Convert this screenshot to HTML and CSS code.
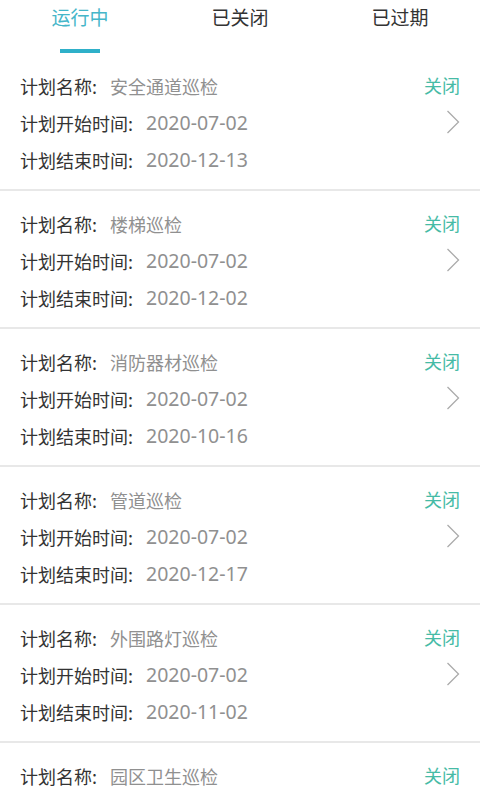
FILE: index.html
```html
<!DOCTYPE html>
<html lang="zh-CN">
<head>
<meta charset="utf-8">
<title>巡检计划</title>
<link rel="stylesheet" href="styles.css">
</head>
<body>
<div class="tabs">
  <div class="tab active"><span class="tab-text">运行中</span><span class="bar"></span></div>
  <div class="tab"><span class="tab-text">已关闭</span></div>
  <div class="tab"><span class="tab-text">已过期</span></div>
</div>
<div class="list">
  <div class="card">
    <div class="info">
      <div class="row"><span class="label">计划名称:</span><span class="value name">安全通道巡检</span></div>
      <div class="row"><span class="label">计划开始时间:</span><span class="value">2020-07-02</span></div>
      <div class="row"><span class="label">计划结束时间:</span><span class="value">2020-12-13</span></div>
    </div>
    <div class="side"><span class="close">关闭</span><svg class="chev" viewBox="0 0 14 24"><path d="M1.5 1 L12.5 12 L1.5 23" /></svg></div>
  </div>
  <div class="card">
    <div class="info">
      <div class="row"><span class="label">计划名称:</span><span class="value name">楼梯巡检</span></div>
      <div class="row"><span class="label">计划开始时间:</span><span class="value">2020-07-02</span></div>
      <div class="row"><span class="label">计划结束时间:</span><span class="value">2020-12-02</span></div>
    </div>
    <div class="side"><span class="close">关闭</span><svg class="chev" viewBox="0 0 14 24"><path d="M1.5 1 L12.5 12 L1.5 23" /></svg></div>
  </div>
  <div class="card">
    <div class="info">
      <div class="row"><span class="label">计划名称:</span><span class="value name">消防器材巡检</span></div>
      <div class="row"><span class="label">计划开始时间:</span><span class="value">2020-07-02</span></div>
      <div class="row"><span class="label">计划结束时间:</span><span class="value">2020-10-16</span></div>
    </div>
    <div class="side"><span class="close">关闭</span><svg class="chev" viewBox="0 0 14 24"><path d="M1.5 1 L12.5 12 L1.5 23" /></svg></div>
  </div>
  <div class="card">
    <div class="info">
      <div class="row"><span class="label">计划名称:</span><span class="value name">管道巡检</span></div>
      <div class="row"><span class="label">计划开始时间:</span><span class="value">2020-07-02</span></div>
      <div class="row"><span class="label">计划结束时间:</span><span class="value">2020-12-17</span></div>
    </div>
    <div class="side"><span class="close">关闭</span><svg class="chev" viewBox="0 0 14 24"><path d="M1.5 1 L12.5 12 L1.5 23" /></svg></div>
  </div>
  <div class="card">
    <div class="info">
      <div class="row"><span class="label">计划名称:</span><span class="value name">外围路灯巡检</span></div>
      <div class="row"><span class="label">计划开始时间:</span><span class="value">2020-07-02</span></div>
      <div class="row"><span class="label">计划结束时间:</span><span class="value">2020-11-02</span></div>
    </div>
    <div class="side"><span class="close">关闭</span><svg class="chev" viewBox="0 0 14 24"><path d="M1.5 1 L12.5 12 L1.5 23" /></svg></div>
  </div>
  <div class="card">
    <div class="info">
      <div class="row"><span class="label">计划名称:</span><span class="value name">园区卫生巡检</span></div>
    </div>
    <div class="side"><span class="close">关闭</span></div>
  </div>
</div>
</body>
</html>
```
FILE: styles.css
```css
html, body {
  margin: 0;
  padding: 0;
  background: #ffffff;
  font-family: "Noto Sans CJK SC", "Noto Sans", sans-serif;
  color: #333333;
  overflow: hidden;
}

.tabs {
  display: grid;
  grid-template-columns: repeat(3, 1fr);
  height: 53px;
}

.tab {
  display: flex;
  flex-direction: column;
  align-items: center;
}

.tab-text {
  font-size: 19px;
  line-height: 34px;
  color: #333333;
}

.tab.active .tab-text {
  color: #45b6c9;
}

.bar {
  display: block;
  width: 40px;
  height: 4px;
  margin-top: 15px;
  background: #2fb0c9;
}

.card {
  display: flex;
  justify-content: space-between;
  padding: 14px 20px 11px 20px;
  border-bottom: 2px solid #e8e8e8;
}

.row {
  display: flex;
  align-items: center;
  height: 37px;
  font-size: 18px;
}

.label {
  color: #333333;
  margin-right: 13px;
}

.value {
  color: #909090;
  font-family: "Noto Sans", "Noto Sans CJK SC", sans-serif;
  font-size: 19.5px;
}

.value.name {
  font-family: "Noto Sans CJK SC", sans-serif;
  font-size: 18px;
}

.side {
  display: flex;
  flex-direction: column;
  align-items: flex-end;
}

.close {
  height: 37px;
  line-height: 37px;
  font-size: 18px;
  color: #46bba6;
}

.chev {
  width: 14px;
  height: 24px;
  margin-top: 6px;
  fill: none;
  stroke: #ababab;
  stroke-width: 1.3;
}
```
